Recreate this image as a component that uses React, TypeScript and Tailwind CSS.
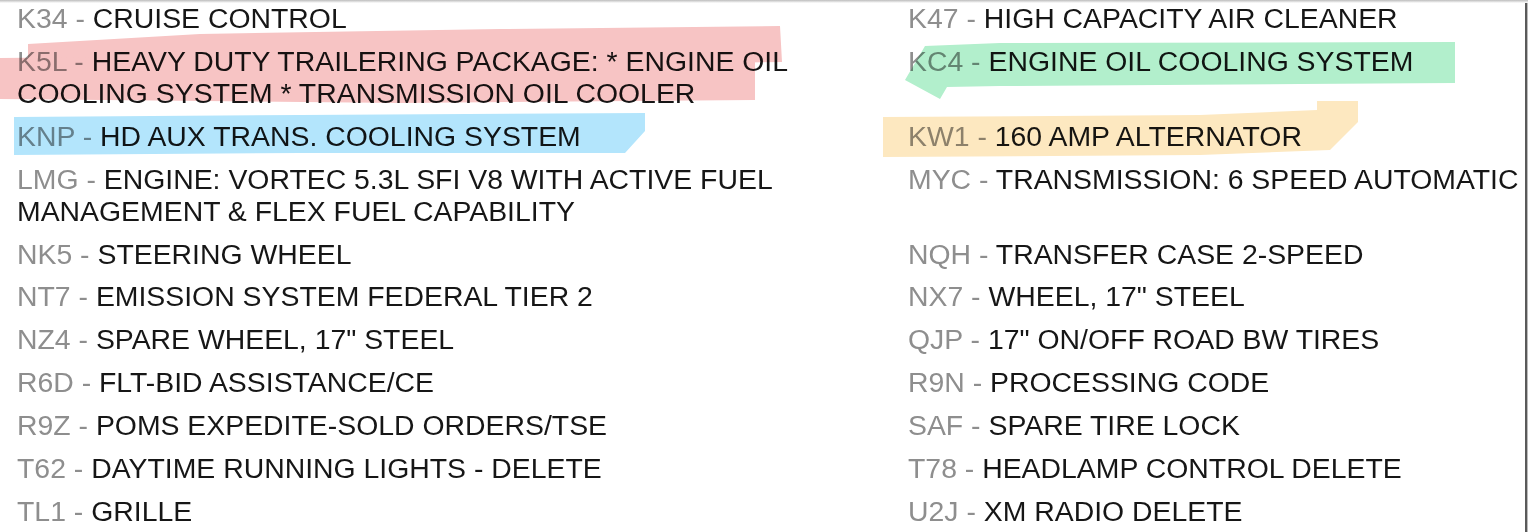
import React from 'react';

type Item = { code: string; text: string };

const left: Item[] = [
  { code: 'K34', text: 'CRUISE CONTROL' },
  { code: 'K5L', text: 'HEAVY DUTY TRAILERING PACKAGE: * ENGINE OIL COOLING SYSTEM * TRANSMISSION OIL COOLER' },
  { code: 'KNP', text: 'HD AUX TRANS. COOLING SYSTEM' },
  { code: 'LMG', text: 'ENGINE: VORTEC 5.3L SFI V8 WITH ACTIVE FUEL MANAGEMENT & FLEX FUEL CAPABILITY' },
  { code: 'NK5', text: 'STEERING WHEEL' },
  { code: 'NT7', text: 'EMISSION SYSTEM FEDERAL TIER 2' },
  { code: 'NZ4', text: 'SPARE WHEEL, 17" STEEL' },
  { code: 'R6D', text: 'FLT-BID ASSISTANCE/CE' },
  { code: 'R9Z', text: 'POMS EXPEDITE-SOLD ORDERS/TSE' },
  { code: 'T62', text: 'DAYTIME RUNNING LIGHTS - DELETE' },
  { code: 'TL1', text: 'GRILLE' },
];

const right: Item[] = [
  { code: 'K47', text: 'HIGH CAPACITY AIR CLEANER' },
  { code: 'KC4', text: 'ENGINE OIL COOLING SYSTEM' },
  { code: 'KW1', text: '160 AMP ALTERNATOR' },
  { code: 'MYC', text: 'TRANSMISSION: 6 SPEED AUTOMATIC' },
  { code: 'NQH', text: 'TRANSFER CASE 2-SPEED' },
  { code: 'NX7', text: 'WHEEL, 17" STEEL' },
  { code: 'QJP', text: '17" ON/OFF ROAD BW TIRES' },
  { code: 'R9N', text: 'PROCESSING CODE' },
  { code: 'SAF', text: 'SPARE TIRE LOCK' },
  { code: 'T78', text: 'HEADLAMP CONTROL DELETE' },
  { code: 'U2J', text: 'XM RADIO DELETE' },
];

function Row({ item, nowrap }: { item: Item; nowrap?: boolean }) {
  return (
    <div className={nowrap ? 'whitespace-nowrap' : ''}>
      <span className="text-[#8e8e8e]">{item.code} - </span>
      <span className="text-[#161616]">{item.text}</span>
    </div>
  );
}

// hand-drawn marker strokes laid over the text
function Highlights() {
  return (
    <svg
      className="absolute inset-0 pointer-events-none mix-blend-multiply"
      width="1528"
      height="532"
      viewBox="0 0 1528 532"
    >
      <polygon fill="#f7c4c4" points="28,44 200,34 500,29 780,26 782,62 600,64 300,70 28,80" />
      <polygon fill="#f7c4c4" points="0,58 300,55 755,52 755,100 400,103 0,99" />
      <polygon fill="#b3e5fc" points="14,117 300,115 645,113 645,131 625,153 300,153 14,155" />
      <polygon fill="#b2efcc" points="925,46 1000,43 1455,42 1455,83 1300,84 1000,86 947,87 940,99 905,80" />
      <polygon fill="#fde8c0" points="883,117 1200,115 1317,110 1317,101 1358,101 1358,122 1330,150 1200,155 883,157" />
    </svg>
  );
}

export default function App() {
  return (
    <div className="relative w-[1528px] h-[532px] overflow-hidden bg-white flex">
      <div className="absolute top-0 left-0 right-0 h-[3px] bg-gradient-to-b from-[#bdbdbd] to-white" />
      <div className="flex-1 pl-[17px] pt-[2px] text-[28.4px] leading-[32px] font-['Liberation_Sans',Arial,sans-serif]">
        <div className="grid grid-cols-[891px_1fr] gap-y-[10.9px]">
          {left.map((l, i) => (
            <React.Fragment key={l.code}>
              <Row item={l} />
              <Row item={right[i]} nowrap />
            </React.Fragment>
          ))}
        </div>
      </div>
      <div className="w-[3px] h-full bg-[#5a5a5a] border-r border-[#bbbbbb]" />
      <Highlights />
    </div>
  );
}
